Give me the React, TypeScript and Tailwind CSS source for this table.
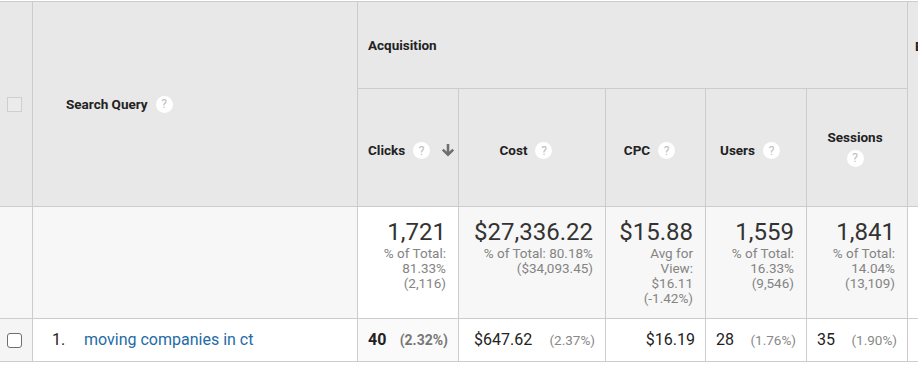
import React from "react";

const border = "border-r border-b border-[#cccccc]";

function Help() {
  return (
    <span className="inline-flex h-[17px] w-[17px] shrink-0 items-center justify-center rounded-full bg-white text-[12px] leading-none text-[#bdbdbd]">
      ?
    </span>
  );
}

function SortArrow() {
  return (
    <svg width="14" height="14" viewBox="0 0 14 14" className="shrink-0">
      <g fill="none" stroke="#6e6e6e" strokeWidth="2.6">
        <path d="M7 1v10.5" />
        <path d="M1.8 6.6L7 11.6l5.2-5" />
      </g>
    </svg>
  );
}

function MetricHead({ label }: { label: string }) {
  return (
    <div className={`${border} flex items-center justify-center bg-[#e8e8e8] pt-[5px]`}>
      <span className="font-bold">{label}</span>
      <span className="ml-[8px]">
        <Help />
      </span>
      <span className="w-[12px]" />
    </div>
  );
}

function Total({
  value,
  lines,
  white,
}: {
  value: string;
  lines: string[];
  white?: boolean;
}) {
  return (
    <div
      className={`${border} ${white ? "bg-white" : "bg-[#f7f7f7]"} flex flex-col items-end pr-[12px] pt-[11px] text-right`}
    >
      <div className="text-[24px] leading-[28px] text-[#333]">{value}</div>
      {lines.map((l) => (
        <div key={l} className="text-[13.5px] leading-[15px] text-[#848484]">
          {l}
        </div>
      ))}
    </div>
  );
}

export default function App() {
  return (
    <div
      className="mt-px w-[918px] overflow-hidden bg-white text-[13.5px] text-[#222]"
      style={{ fontFamily: "Roboto, 'Liberation Sans', sans-serif" }}
    >
      <div className="grid grid-cols-[33px_325px_101px_147px_100px_101px_101px_1fr] grid-rows-[87px_118px_112px_43px] border-t border-[#cccccc]">
        {/* header */}
        <div className={`${border} row-span-2 flex items-center bg-[#e8e8e8] pl-[7px]`}>
          <span className="h-[15px] w-[15px] border-[1.5px] border-[#cfcfcf] bg-[#ebebeb]" />
        </div>
        <div className={`${border} row-span-2 flex items-center gap-[8px] bg-[#e8e8e8] pl-[33px]`}>
          <span className="font-bold">Search Query</span>
          <Help />
        </div>
        <div className={`${border} col-span-5 flex items-center bg-[#e8e8e8] pl-[10px] font-bold`}>
          Acquisition
        </div>
        <div className="row-span-2 border-b border-[#cccccc] bg-[#e8e8e8] pl-[7px] pt-[36px] font-bold leading-[16px]">
          Behavior
        </div>

        <div className={`${border} flex items-center bg-[#e8e8e8] pl-[10px] pt-[5px]`}>
          <span className="font-bold">Clicks</span>
          <span className="ml-[8px]">
            <Help />
          </span>
          <span className="ml-[11px]">
            <SortArrow />
          </span>
        </div>
        <MetricHead label="Cost" />
        <MetricHead label="CPC" />
        <MetricHead label="Users" />
        <div className={`${border} flex flex-col items-center justify-center gap-[5px] bg-[#e8e8e8] pr-[4px]`}>
          <span className="font-bold leading-[16px]">Sessions</span>
          <Help />
        </div>

        {/* totals */}
        <div className={`${border} bg-[#f7f7f7]`} />
        <div className={`${border} bg-[#f7f7f7]`} />
        <Total value="1,721" lines={["% of Total:", "81.33%", "(2,116)"]} white />
        <Total value="$27,336.22" lines={["% of Total: 80.18%", "($34,093.45)"]} />
        <Total value="$15.88" lines={["Avg for", "View:", "$16.11", "(-1.42%)"]} />
        <Total value="1,559" lines={["% of Total:", "16.33%", "(9,546)"]} />
        <Total value="1,841" lines={["% of Total:", "14.04%", "(13,109)"]} />
        <div className="border-b border-[#cccccc] bg-white" />

        {/* row 1 */}
        <div className={`${border} flex items-center bg-[#f5f5f5] pl-[7px]`}>
          <span className="h-[15px] w-[15px] rounded-[3px] border-[1.5px] border-[#6f6f6f] bg-white" />
        </div>
        <div className={`${border} flex items-center pl-[19px] text-[16px]`}>
          <span className="w-[32px] text-[#222]">1.</span>
          <a className="text-[#236ba6]">moving companies in ct</a>
        </div>
        <div className={`${border} flex items-center justify-between bg-[#fafafa] px-[10px]`}>
          <span className="text-[16px] font-bold">40</span>
          <span className="text-[14px] font-bold text-[#777]">(2.32%)</span>
        </div>
        <div className={`${border} flex items-center justify-between pl-[15px] pr-[10px]`}>
          <span className="text-[16px]">$647.62</span>
          <span className="text-[#888]">(2.37%)</span>
        </div>
        <div className={`${border} flex items-center justify-end pr-[10px]`}>
          <span className="text-[16px]">$16.19</span>
        </div>
        <div className={`${border} flex items-center justify-between px-[10px]`}>
          <span className="text-[16px]">28</span>
          <span className="text-[#888]">(1.76%)</span>
        </div>
        <div className={`${border} flex items-center justify-between px-[10px]`}>
          <span className="text-[16px]">35</span>
          <span className="text-[#888]">(1.90%)</span>
        </div>
        <div className="border-b border-[#cccccc]" />
      </div>
    </div>
  );
}
